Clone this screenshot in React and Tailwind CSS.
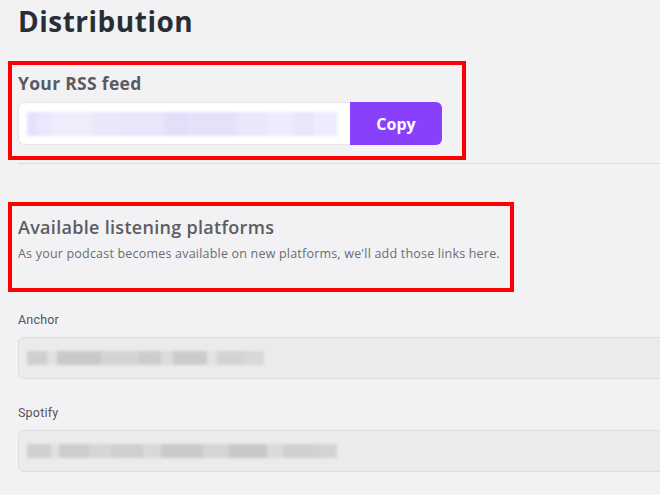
import React from 'react';

// blurred placeholder text inside the fields (widths in px, shade)
const rssBlur = [
  [10, '#e6e1fb'], [14, '#ebe7fc'], [40, '#efecfc'], [30, '#ebe7fb'], [44, '#e9e5fb'],
  [22, '#e4defa'], [50, '#e6e0fa'], [30, '#ebe7fb'], [26, '#eeebfc'], [20, '#e9e5fb'], [24, '#eeebfc'],
];
const anchorBlur = [
  [20, '#cfcfd1'], [10, '#e1e1e2'], [44, '#c9c9cb'], [38, '#d4d4d6'], [22, '#cdcdcf'],
  [12, '#dcdcdd'], [34, '#cbcbcd'], [10, '#e2e2e3'], [26, '#d3d3d5'], [21, '#d8d8da'],
];
const spotifyBlur = [
  [24, '#d0d0d2'], [8, '#e1e1e2'], [30, '#cdcdcf'], [22, '#d6d6d8'], [32, '#cfcfd1'],
  [18, '#d9d9db'], [42, '#cacacc'], [26, '#d5d5d7'], [38, '#c8c8ca'], [16, '#dadadc'],
  [30, '#d0d0d2'], [24, '#d3d3d5'],
];

function Blur({ parts, h = 'h-[14px]' }) {
  return (
    <div className={`flex items-center blur-[1.5px] ${h}`}>
      {parts.map(([w, c], i) => (
        <div key={i} className="h-full" style={{ width: w, background: c }} />
      ))}
    </div>
  );
}

function PlatformField({ label, parts, first }) {
  return (
    <div className={first ? 'mt-[18px]' : 'mt-[24px]'}>
      <div className="pl-[18px] text-[12.5px] leading-[20px] tracking-[0.2px] text-[#55555b] font-['Roboto',sans-serif]">
        {label}
      </div>
      <div className="ml-[18px] mt-[7px] w-[660px] h-[42px] rounded-[6px] border border-[#dddddf] bg-[#ebebec] flex items-center pl-[8px]">
        <Blur parts={parts} />
      </div>
    </div>
  );
}

export default function App() {
  return (
    <div className="w-[660px] h-[495px] overflow-hidden bg-[#f2f2f4] font-['Open_Sans',sans-serif]">
      <h1 className="pl-[18px] pt-[4px] text-[28px] leading-[34px] font-bold tracking-[0.5px] text-[#292e35]">
        Distribution
      </h1>

      <div className="ml-[8px] mt-[23px] w-[458px] border-4 border-[#fe0000] pl-[6px] pt-[7px] pb-[11px]">
        <div className="text-[17.5px] leading-[22px] font-bold tracking-[0.3px] text-[#5a5a60]">Your RSS feed</div>
        <div className="mt-[8px] flex h-[43px]">
          <div className="w-[332px] h-full rounded-l-[6px] border border-[#e6e6ea] border-r-0 bg-white flex items-center pl-[8px]">
            <Blur parts={rssBlur} h="h-[24px]" />
          </div>
          <button className="w-[92px] h-full rounded-r-[6px] bg-[#8940fa] text-white text-[16px] font-bold">
            Copy
          </button>
        </div>
      </div>

      <div className="ml-[18px] mt-[3px] h-px bg-[#dcdcde]" />

      <div className="ml-[8px] mt-[38px] w-[506px] border-4 border-[#fe0000] pl-[6px] pt-[10px] pb-[26px]">
        <div className="text-[18px] leading-[22px] font-semibold tracking-[0.3px] text-[#5c5c63]">Available listening platforms</div>
        <div className="mt-[8px] text-[12.5px] leading-[16px] tracking-[0.2px] text-[#6c6c72]">
          As your podcast becomes available on new platforms, we'll add those links here.
        </div>
      </div>

      <PlatformField label="Anchor" parts={anchorBlur} first />
      <PlatformField label="Spotify" parts={spotifyBlur} />
    </div>
  );
}
